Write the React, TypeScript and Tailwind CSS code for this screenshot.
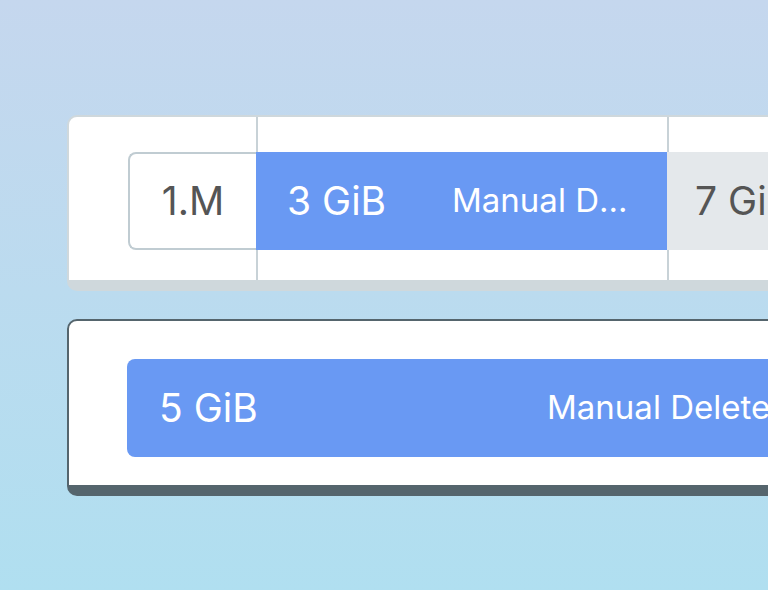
import React from "react";

const font = { fontFamily: "Inter, 'Noto Sans', sans-serif" };

const Spacer = ({ h, divider }: { h: string; divider?: boolean }) => (
  <div className={`${h} ${divider ? "border-l-2 border-[#c8d2d7]" : ""}`} />
);

export default function App() {
  return (
    <div
      className="h-[590px] w-[768px] overflow-hidden bg-gradient-to-b from-[#c5d7ee] to-[#b0dff0] pt-[115px]"
      style={font}
    >
      {/* row card with segments */}
      <div className="ml-[67px] w-[760px] rounded-[10px] border-2 border-b-[11px] border-[#cfd8dc] bg-white flex overflow-hidden">
        <div className="w-[187px] shrink-0 flex flex-col">
          <div className="h-[35px]" />
          <div className="h-[98px] flex justify-end">
            <div className="w-[128px] h-full rounded-l-[8px] border-2 border-r-0 border-[#c0ccd2] flex items-center justify-center text-[39px] text-[#555555]">
              1.M
            </div>
          </div>
          <div className="h-[30px]" />
        </div>

        <div className="w-[411px] shrink-0 flex flex-col">
          <Spacer h="h-[35px]" divider />
          <div className="h-[98px] bg-[#6999f3] flex items-center justify-between pl-[31px] pr-[38px] text-white">
            <span className="text-[39px]">3 GiB</span>
            <span className="text-[33px] w-[177px] truncate">Manual Delete</span>
          </div>
          <Spacer h="h-[30px]" divider />
        </div>

        <div className="w-[300px] shrink-0 flex flex-col">
          <Spacer h="h-[35px]" divider />
          <div className="h-[98px] bg-[#e4e8eb] flex items-center pl-[28px] text-[39px] text-[#555555]">
            7 GiB
          </div>
          <Spacer h="h-[30px]" divider />
        </div>
      </div>

      {/* selected card */}
      <div className="mt-[28px] ml-[67px] w-[760px] rounded-[10px] border-2 border-b-[11px] border-[#55656d] bg-white pl-[58px] pt-[38px] pb-[28px]">
        <div className="h-[98px] w-[720px] rounded-[8px] bg-[#6999f3] flex items-center pl-[32px] text-white">
          <span className="w-[388px] shrink-0 text-[39px]">5 GiB</span>
          <span className="text-[33px] whitespace-nowrap">Manual Delete</span>
        </div>
      </div>
    </div>
  );
}
